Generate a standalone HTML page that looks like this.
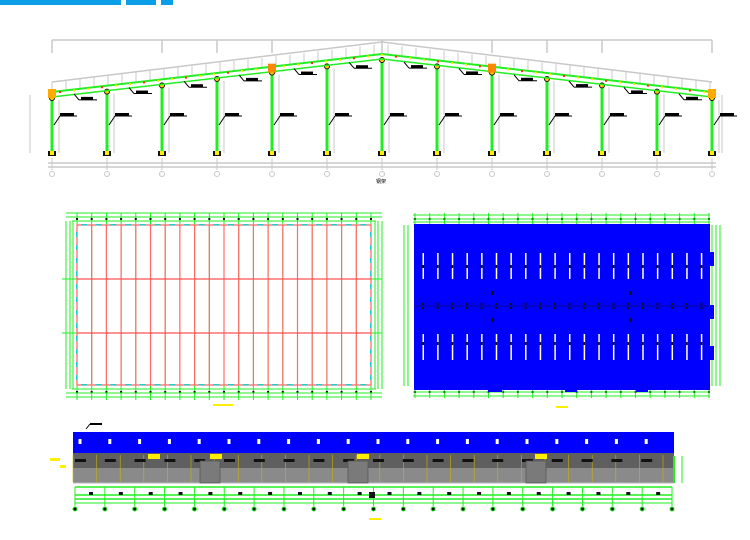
<!DOCTYPE html>
<html><head><meta charset="utf-8"><style>
html,body{margin:0;padding:0;background:#fff;width:750px;height:540px;overflow:hidden}
svg{display:block}
</style></head><body>
<svg id="s" width="750" height="540" viewBox="0 0 750 540" xmlns="http://www.w3.org/2000/svg" font-family="Liberation Sans, Noto Sans CJK SC, sans-serif">
<rect x="0" y="0" width="121" height="5" fill="#0a9ee6"/>
<rect x="126" y="0" width="30" height="5" fill="#0a9ee6"/>
<rect x="161" y="0" width="12" height="5" fill="#0a9ee6"/>
<g id="g"></g>
<text x="376" y="183" font-size="5" fill="#000">钢架</text>
</svg>
<script>
var g=document.getElementById('g'),h='';
function L(x1,y1,x2,y2,c,w){h+='<line x1="'+x1+'" y1="'+y1+'" x2="'+x2+'" y2="'+y2+'" stroke="'+c+'" stroke-width="'+(w||1)+'"/>';}
function R(x,y,w,hh,c){h+='<rect x="'+x+'" y="'+y+'" width="'+w+'" height="'+hh+'" fill="'+c+'"/>';}
function C(x,y,r,c,f){h+='<circle cx="'+x+'" cy="'+y+'" r="'+r+'" stroke="'+c+'" fill="'+(f||'none')+'" stroke-width="1"/>';}
var gr='#c8c8c8',gn='#22ee22';
var cols=[];for(var i=0;i<13;i++)cols.push(52+55*i);
function ey(x){return x<=382?95-(x-52)*(38/330):57+(x-382)*(38/330);}
L(52,40,712,40,gr,1.5);
for(var i=0;i<13;i+=2){L(cols[i],40,cols[i],53,gr,1.5);}
L(217,40,217,53,gr,1.5);L(547,40,547,53,gr,1.5);
L(52,82,382,42,gr,1.5);L(382,42,712,82,gr,1.5);
for(var x=52;x<=712;x+=14){L(x,ey(x)-13,x,ey(x)-3,gr,1);}
L(30,95,30,153,gr,1);L(722,95,722,153,gr,1);
L(48,163,716,163,gr,1.5);L(48,167,716,167,gr,1.5);
cols.forEach(function(x,i){
 L(x+7,ey(x)+5,x+7,153,gr,1);
 L(x,158,x,170,gr,1);C(x,174,2.5,gr);
 L(x,ey(x)+2,x,153,gn,3);
 R(x-4,151,8,5,'#111');R(x-2,151,4,4,'#ffee00');
 C(x,ey(x)+3,2.5,'#111','#ffcc00');
 L(x+2,125,x+8,116,'#000',1);L(x+8,116,x+25,116,'#000',1);R(x+8,113,14,3,'#000');
});
L(52,92,382,54,gn,2);L(382,54,712,92,gn,2);
L(52,97,382,59,gn,1.5);L(382,59,712,97,gn,1.5);
for(var x=60;x<712;x+=14){R(x-1,ey(x)-3,2,2,(x%3?'#ffee00':'#ff3300'));}
[272,492].forEach(function(x){R(x-4,ey(x)-6,8,9,'#ff8800');});
[52,712].forEach(function(x){R(x-4,ey(x)-6,8,9,'#ffaa00');});
for(var i=0;i<12;i++){var x=cols[i]+27;L(x-5,ey(x)+2,x,ey(x)+8,'#000',1);L(x,ey(x)+8,x+18,ey(x)+8,'#000',1);R(x+2,ey(x)+5,12,3,'#000');}
// plan 1
for(var i=0;i<21;i++){var x=77+i*14.7;L(x,213,x,400,gn,1);R(x-1,218,2,2,'#111');R(x-1,391,2,2,'#111');}
L(66,213,382,213,gn,1);L(66,217,382,217,gn,1);L(72,221,376,221,gn,1);
L(66,393,382,393,gn,1);L(66,397,382,397,gn,1);L(72,389,376,389,gn,1);
L(66,221,66,389,gn,1);L(70,221,70,389,gn,1);L(73,221,73,389,gn,1);
L(378,221,378,389,gn,1);L(382,221,382,389,gn,1);L(375,221,375,389,gn,1);
L(62,279,382,279,gn,1);L(62,333,382,333,gn,1);
h+='<rect x="77" y="225" width="294" height="160" fill="none" stroke="#ff6b6b" stroke-width="1.3"/>';
for(var i=1;i<20;i++){var x=77+i*14.7;L(x,225,x,385,'#ff6b6b',1.2);}
L(77,279,371,279,'#ff5050',1.2);L(77,333,371,333,'#ff5050',1.2);
for(var i=0;i<20;i++){var x=81+i*14.7;R(x,224,6,1.5,'#22cccc');R(x,384,6,1.5,'#22cccc');}
for(var y=232;y<385;y+=13){R(76,y,1.5,5,'#22cccc');R(370,y,1.5,5,'#22cccc');}
R(213,404,20,2,'#ffee00');
// plan 2
for(var i=0;i<21;i++){var x=415+i*14.7;L(x,213,x,398,gn,1);R(x-1,218,2,2,'#111');R(x-1,391,2,2,'#111');}
L(413,215,710,215,gn,1);L(413,219,710,219,gn,1);L(413,222,710,222,gn,1);
L(413,392,710,392,gn,1);L(413,396,710,396,gn,1);
L(404,225,404,386,gn,1);L(408,225,408,386,gn,1);L(712,225,712,386,gn,1);L(716,225,716,386,gn,1);L(720,225,720,386,gn,1);
R(414,224,296,166,'#0000ff');
R(488,388,14,4,'#0000ff');R(565,388,12,4,'#0000ff');R(636,388,12,4,'#0000ff');
R(710,252,4,14,'#0000ff');R(710,305,4,14,'#0000ff');R(710,346,4,14,'#0000ff');
for(var i=0;i<20;i++){var x=423+i*14.65;R(x-0.5,253,1.5,26,'#fff');R(x-0.5,334,1.5,26,'#fff');R(x-1,265,2,3,'#111');R(x-1,342,2,3,'#111');R(x-1,303,2,2,'#111');R(x-1,307,2,2,'#111');}
L(414,306,710,306,'#111',0.5);
R(491,291,3,4,'#111');R(629,291,3,4,'#111');R(491,318,3,4,'#111');R(629,318,3,4,'#111');
R(556,406,12,2,'#ffee00');
// elevation
R(73,432,601,21,'#0000ff');
R(73,453,601,15,'#5f5f5f');R(73,468,601,15,'#8a8a8a');L(73,483,674,483,'#bbb',1);
for(var i=0;i<26;i++){var x=73+i*23.6;L(x,455,x,482,'#c8b400',0.6);}
for(var i=0;i<20;i++){var x=80+i*29.8;R(x-1.5,439,3,5,'#fff');R(x-5,459,11,3,'#111');}
[[200,220],[348,368],[526,546]].forEach(function(d){R(d[0],461,d[1]-d[0],22,'#7a7a7a');h+='<rect x="'+d[0]+'" y="461" width="'+(d[1]-d[0])+'" height="22" fill="none" stroke="#555" stroke-width="0.7"/>';});
[[148,454],[210,454],[357,454],[535,454]].forEach(function(p){R(p[0],p[1],12,5,'#ffee00');});
R(50,458,10,3,'#ffee00');R(60,465,6,3,'#ffee00');
L(674,456,674,483,gn,2);L(682,456,682,483,gn,1);
L(75,487,672,487,gn,1.5);L(75,495,672,495,gn,1.5);L(75,499,672,499,gn,1.5);L(75,503,672,503,gn,1);
for(var i=0;i<21;i++){var x=75+i*29.85;L(x,487,x,506,gn,1);C(x,509,2,gn,'#111');if(i<20)R(x+14,492,4,3,'#111');}
R(369,492,6,6,'#111');R(369,518,12,2,'#ffee00');
L(86,429,90,424,'#000',1);R(90,423,12,2,'#000');
g.innerHTML=h;
</script>
</body></html>
